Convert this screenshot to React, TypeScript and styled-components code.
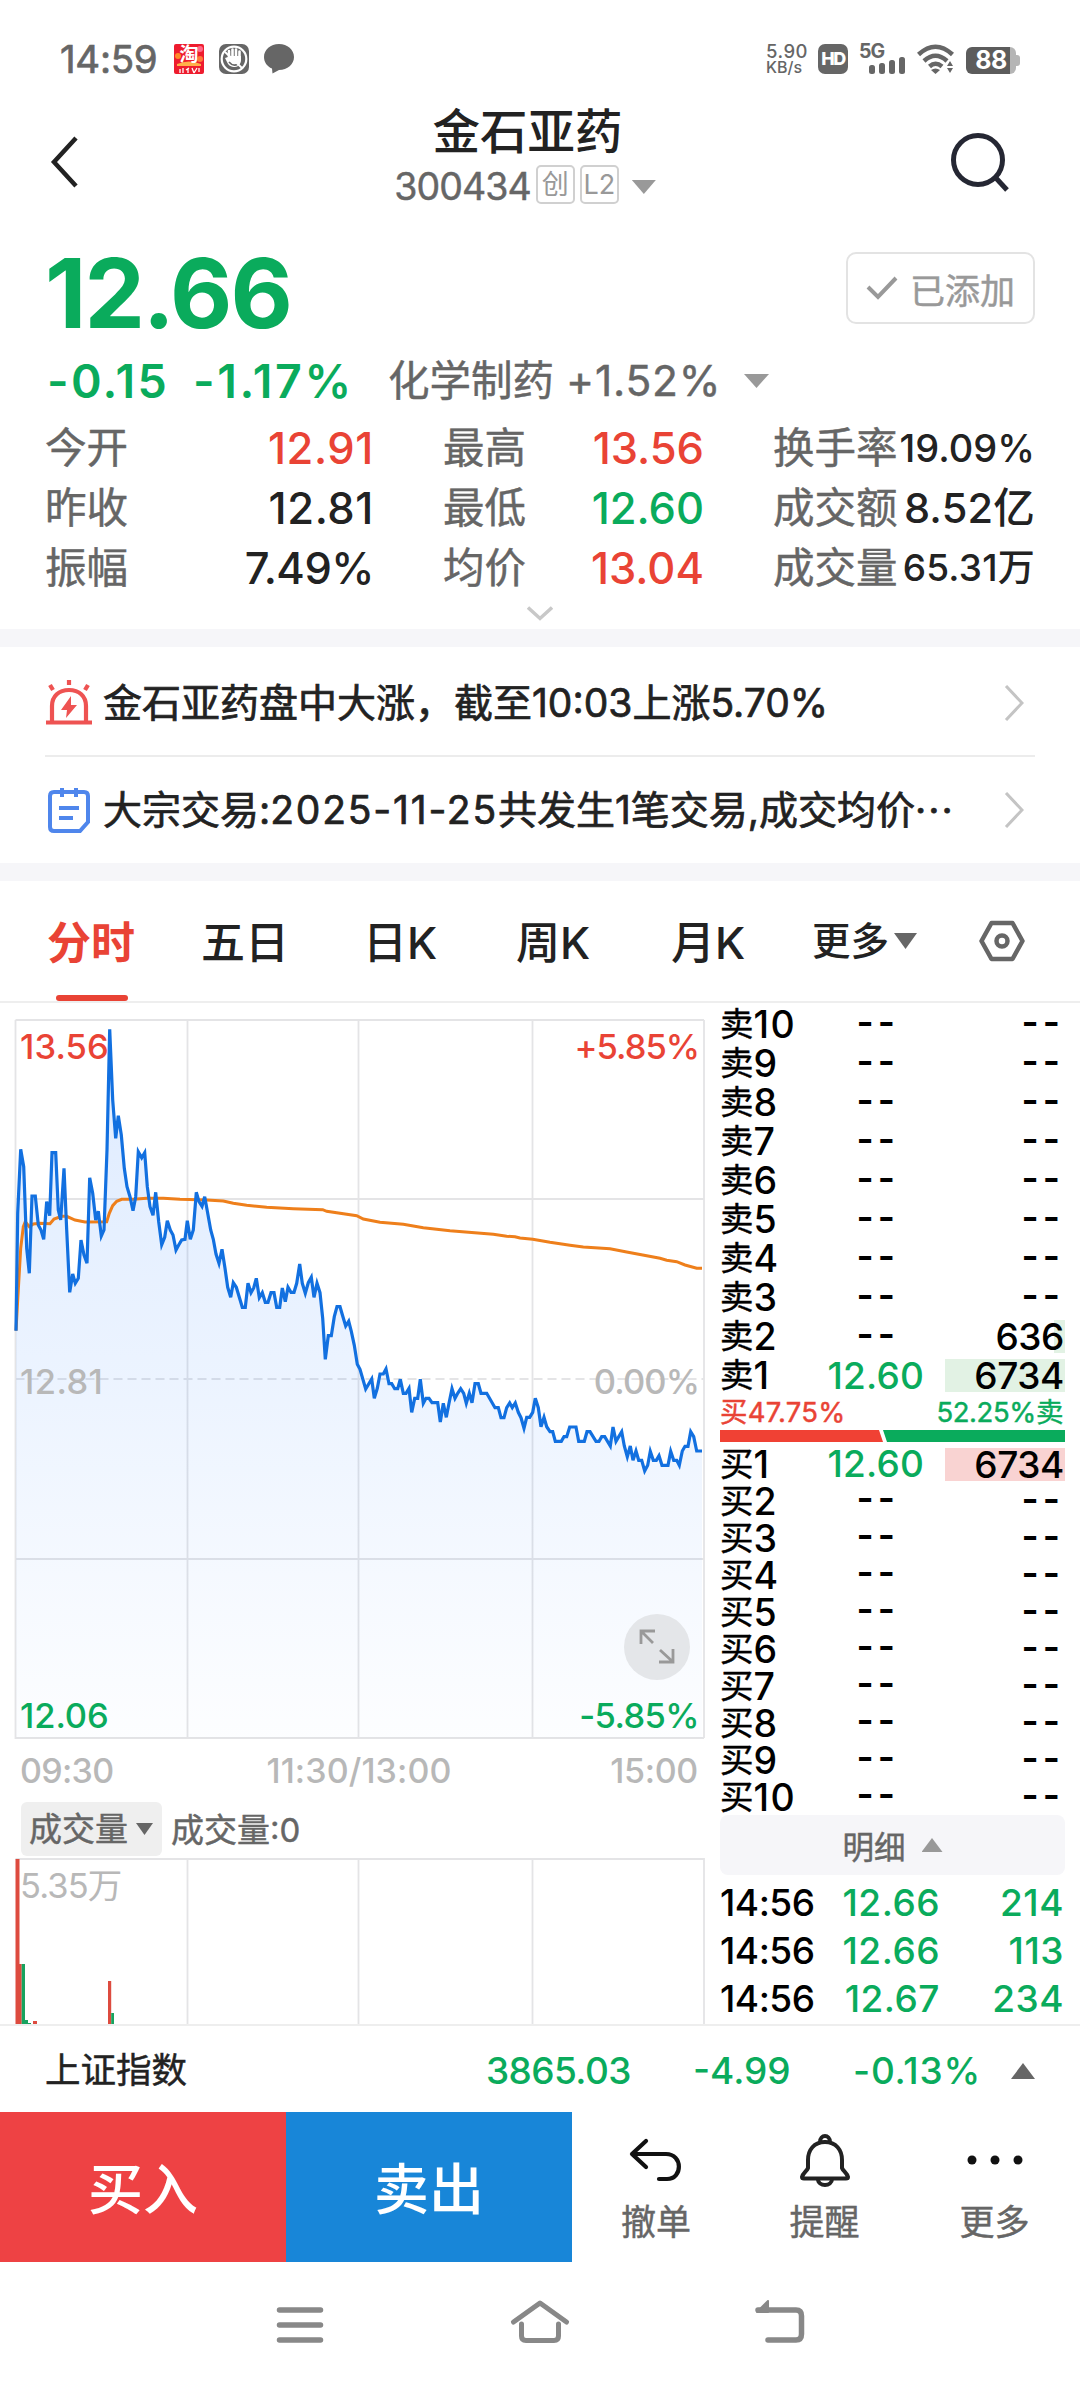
import React from "react";
import styled, { createGlobalStyle } from "styled-components";

const RED = "#e94335";
const GREEN = "#0aab5c";
const INK = "#222222";
const GREY = "#666666";
const PALE = "#b8b8b8";

const Global = createGlobalStyle`
  * { box-sizing: border-box; }
  body {
    margin: 0;
    background: #fff;
    font-family: Inter, "Noto Sans CJK SC", sans-serif;
    font-weight: 500;
    color: ${INK};
  }
`;

const Page = styled.div`
  width: 1080px;
  height: 2388px;
  display: flex;
  flex-direction: column;
  overflow: hidden;
  background: #fff;
`;

/* text with tunable size, tracking and colour */
const Txt = styled.span<{ $s: number; $ls?: number; $c?: string; $w?: number }>`
  font-size: ${(p) => p.$s}px;
  letter-spacing: ${(p) => p.$ls ?? 0}px;
  color: ${(p) => p.$c ?? INK};
  font-weight: ${(p) => p.$w ?? 500};
  -webkit-text-stroke: ${(p) => (p.$w === 400 ? 0.45 : 0)}px currentColor;
  white-space: nowrap;
`;

const Tri = styled.i<{ $w: number; $h: number; $c: string; $up?: boolean }>`
  display: block;
  width: ${(p) => p.$w}px;
  height: ${(p) => p.$h}px;
  background: ${(p) => p.$c};
  clip-path: ${(p) => (p.$up ? "polygon(50% 0, 100% 100%, 0 100%)" : "polygon(0 0, 100% 0, 50% 100%)")};
`;

/* ---------- status bar ---------- */
const Status = styled.header`
  height: 96px;
  padding: 22px 60px 0 60px;
  display: flex;
  align-items: center;
  line-height: 40px;
`;
const StatusLeft = styled.div`
  display: flex;
  align-items: center;
  gap: 15px;
  flex: 1;
`;
const Clock = styled.div`
  width: 99px;
  font-size: 38.5px;
  letter-spacing: -0.3px;
  font-weight: 400;
  color: ${GREY};
  -webkit-text-stroke: 0.7px ${GREY};
`;
const StatusRight = styled.div`
  display: flex;
  align-items: center;
`;
const Speed = styled.div`
  width: 51px;
  margin-left: -1px;
  margin-right: 1px;
  font-size: 18.5px;
  line-height: 16px;
  letter-spacing: 0.5px;
  color: ${GREY};
  white-space: nowrap;
`;
const SpeedUnit = styled.div`
  font-size: 16px;
  line-height: 16px;
  letter-spacing: 0;
`;
const HdBadge = styled.div`
  width: 30px;
  height: 30px;
  border-radius: 7px;
  background: ${GREY};
  color: #fff;
  font-size: 18px;
  font-weight: 800;
  line-height: 30px;
  text-align: center;
  letter-spacing: -1.5px;
  margin-right: 12px;
`;
const Battery = styled.div`
  width: 54px;
  height: 27px;
  margin: 2px 0 0 11px;
  display: flex;
  align-items: center;
`;
const BatteryBody = styled.div`
  width: 50px;
  height: 27px;
  border-radius: 6px;
  background: linear-gradient(90deg, #5c5c5c 44px, #b5b5b5 44px);
  color: #fff;
  font-weight: 700;
  font-size: 25px;
  line-height: 27px;
  text-align: center;
  letter-spacing: -0.5px;
`;
const BatteryTip = styled.div`
  width: 4px;
  height: 11px;
  border-radius: 0 3px 3px 0;
  background: #b5b5b5;
`;

/* ---------- title ---------- */
const TitleBar = styled.div`
  height: 132px;
  padding: 0 69px 0 50px;
  display: grid;
  grid-template-columns: 275px 400px 1fr;
`;
const TitleMid = styled.div`
  display: flex;
  flex-direction: column;
  align-items: center;
  padding-top: 3px;
`;
const Name = styled.div`
  font-size: 47.5px;
  line-height: 65px;
  padding-left: 5px;
`;
const CodeRow = styled.div`
  display: flex;
  align-items: center;
  height: 46px;
  line-height: 46px;
`;
const Tag = styled.div`
  width: 39px;
  height: 39px;
  border: 2px solid #d0d0d0;
  border-radius: 5px;
  margin: -5px 0 0 5px;
  color: #999;
  font-size: 27px;
  line-height: 35px;
  text-align: center;
  font-weight: 400;
`;
const CenterV = styled.div`
  display: flex;
  align-items: center;
`;
const EndV = styled(CenterV)`
  justify-content: flex-end;
`;

/* ---------- quote ---------- */
const Quote = styled.section`
  height: 401px;
  padding: 0 45px;
  display: flex;
  flex-direction: column;
`;
const PriceRow = styled.div`
  height: 130px;
  display: flex;
  justify-content: space-between;
  align-items: center;
`;
const Added = styled.button`
  width: 189px;
  height: 72px;
  margin: 0 0 10px;
  padding: 0 0 0 18px;
  border: 2px solid #e3e3e3;
  border-radius: 10px;
  background: #fff;
  display: flex;
  align-items: center;
  gap: 12px;
  font-family: inherit;
`;
const ChangeRow = styled.div`
  height: 46px;
  margin-bottom: 14px;
  display: flex;
  align-items: center;
  line-height: 46px;
`;
const Cell = styled.div<{ $w: number; $ml?: number }>`
  width: ${(p) => p.$w}px;
  margin-left: ${(p) => p.$ml ?? 0}px;
  display: flex;
  align-items: center;
  flex: none;
`;
const StatGrid = styled.div`
  display: grid;
  grid-template-columns: 329px 261px 262px;
  column-gap: 69px;
  grid-template-rows: repeat(3, 60px);
  line-height: 60px;
`;
const Stat = styled.div`
  display: flex;
  justify-content: space-between;
  align-items: center;
`;
const Expand = styled.div`
  height: 31px;
  display: flex;
  align-items: center;
  justify-content: center;
`;
const Band = styled.div`
  height: 18px;
  background: #f6f6f9;
  flex: none;
`;

/* ---------- news ---------- */
const News = styled.div<{ $h: number; $pt?: number }>`
  height: ${(p) => p.$h}px;
  padding: ${(p) => p.$pt ?? 0}px 11px 0 0;
  margin: 0 45px;
  display: flex;
  align-items: center;
  line-height: 50px;
`;
const NewsText = styled.div`
  margin-left: 10px;
  flex: 1;
  font-size: 39px;
  font-weight: 400;
  -webkit-text-stroke: 0.7px currentColor;
  white-space: nowrap;
`;
const Wide = styled.span<{ $ls: number }>`
  letter-spacing: ${(p) => p.$ls}px;
`;
const Rule = styled.div`
  height: 2px;
  margin: 0 45px;
  background: #ececec;
`;

/* ---------- tabs ---------- */
const Tabs = styled.nav`
  height: 122px;
  border-bottom: 2px solid #eeeeee;
  padding-left: 47px;
  display: grid;
  grid-template-columns: 154px 162px 153px 155px 141px 167px 1fr;
  align-items: center;
  line-height: 60px;
`;
const Tab = styled.div<{ $on?: boolean }>`
  height: 120px;
  padding-top: 32px;
  font-size: 44px;
  color: ${(p) => (p.$on ? RED : INK)};
  font-weight: ${(p) => (p.$on ? 700 : 500)};
  display: flex;
  flex-direction: column;
`;
const TabLine = styled.div`
  width: 72px;
  height: 6px;
  border-radius: 3px;
  margin: 22px 0 0 9px;
  background: ${RED};
`;
const MoreTab = styled.div`
  display: flex;
  align-items: center;
  gap: 5px;
`;

/* ---------- main ---------- */
const Main = styled.main`
  height: 1021px;
  display: grid;
  grid-template-columns: 720px 345px;
`;
const Left = styled.div``;
const ChartBox = styled.div`
  position: relative;
  height: 743px;
`;
const VolBox = styled.div`
  position: relative;
  height: 167px;
`;
const Overlay = styled.span<{ $top: number; $right?: boolean; $c: string; $ls?: number }>`
  position: absolute;
  top: ${(p) => p.$top}px;
  ${(p) => (p.$right ? "right: 21px;" : "left: 20px;")}
  font-size: 34.5px;
  line-height: 40px;
  font-weight: 450;
  letter-spacing: ${(p) => p.$ls ?? -0.6}px;
  color: ${(p) => p.$c};
  white-space: nowrap;
`;
const VolMax = styled(Overlay)`
  font-weight: 400;
`;
const FullBtn = styled.div`
  position: absolute;
  left: 624px;
  top: 611px;
  width: 66px;
  height: 66px;
  border-radius: 50%;
  background: #e4e6e9;
`;
const Axis = styled.div`
  height: 50px;
  padding: 0 22px 0 20px;
  display: grid;
  grid-template-columns: 100px 1fr 100px;
  line-height: 50px;
  & > :nth-child(2) { text-align: center; }
  & > :nth-child(3) { text-align: right; }
`;
const VolBar = styled.div`
  height: 61px;
  padding: 6px 0 0 21px;
  display: flex;
  line-height: 56px;
`;
const VolBtn = styled.div`
  width: 141px;
  height: 54px;
  border-radius: 6px;
  background: #efefef;
  padding-left: 8px;
  margin-right: 9px;
  display: flex;
  align-items: center;
  gap: 8px;
`;
const Book = styled.div`
  padding-top: 2px;
`;
const BookRow = styled.div<{ $h: number }>`
  height: ${(p) => p.$h}px;
  line-height: ${(p) => p.$h}px;
  display: grid;
  grid-template-columns: 100px 105px 20px 120px;
  font-size: 37px;
  font-weight: 450;
  color: #000;
  white-space: nowrap;
`;
const Side = styled.div`
  display: flex;
  align-items: center;
`;
const Px = styled.div<{ $dash?: boolean }>`
  text-align: right;
  color: ${(p) => (p.$dash ? "#000" : GREEN)};
  letter-spacing: ${(p) => (p.$dash ? "4px" : "0.2px")};
  font-weight: ${(p) => (p.$dash ? 600 : 450)};
  ${(p) => (p.$dash ? "padding-right: 26px; margin-top: -3px;" : "padding-right: 1px;")}
`;
const Qty = styled.div<{ $dash?: boolean; $fill?: number; $tone?: string }>`
  grid-column: 4;
  text-align: right;
  margin: ${(p) => (p.$dash ? "0 0 6px" : "3px 0")};
  line-height: 33px;
  height: calc(100% - 6px);
  padding-right: 1px;
  letter-spacing: ${(p) => (p.$dash ? "4px" : "-0.4px")};
  font-weight: ${(p) => (p.$dash ? 600 : 450)};
  background: ${(p) => (p.$fill ? `linear-gradient(${p.$tone}, ${p.$tone}) right / ${p.$fill}px 100% no-repeat` : "none")};
`;
const Ratio = styled.div`
  height: 35px;
  line-height: 34px;
  padding: 0 2px 0 0;
  display: flex;
  justify-content: space-between;
`;
const RatioBar = styled.div`
  height: 12px;
  margin-bottom: 3px;
  display: flex;
  & > :first-child {
    width: 163px;
    background: #f04134;
    clip-path: polygon(0 0, 159px 0, 163px 100%, 0 100%);
  }
  & > :last-child {
    flex: 1;
    background: ${GREEN};
    clip-path: polygon(0 0, 100% 0, 100% 100%, 4px 100%);
  }
`;
const Detail = styled.div`
  height: 60px;
  margin-bottom: 4px;
  border-radius: 8px;
  background: #f6f6f9;
  display: flex;
  align-items: center;
  justify-content: center;
  gap: 16px;
`;
const Tick = styled.div`
  height: 48px;
  line-height: 48px;
  display: grid;
  grid-template-columns: 120px 100px 124px;
  font-size: 37px;
  letter-spacing: -0.5px;
  font-weight: 450;
  color: #000;
`;
const TickNum = styled.div`
  text-align: right;
  letter-spacing: 0.5px;
  color: ${GREEN};
`;

/* ---------- bottom ---------- */
const IndexBar = styled.div`
  height: 88px;
  border-top: 2px solid #eeeeee;
  padding: 4px 45px 0 45px;
  display: flex;
  align-items: center;
  line-height: 50px;
`;
const Actions = styled.div`
  height: 150px;
  display: flex;
`;
const Trade = styled.div<{ $c: string }>`
  width: 286px;
  background: ${(p) => p.$c};
  color: #fff;
  font-size: 55px;
  line-height: 154px;
  text-align: center;
`;
const Tools = styled.div`
  flex: 1;
  display: grid;
  grid-template-columns: 168px 169px 171px;
`;
const Tool = styled.div`
  display: flex;
  flex-direction: column;
  align-items: center;
  padding-top: 18px;
  font-size: 35px;
  line-height: 44px;
  color: ${GREY};
  font-weight: 400;
  -webkit-text-stroke: 0.45px currentColor;
  & > svg { margin-bottom: 6px; }
`;
const NavBar = styled.div`
  height: 126px;
  display: flex;
  align-items: center;
  padding-left: 270px;
  gap: 180px;
`;
const Wifi = styled.svg`
  margin-left: 11px;
`;
const Glyph = styled.svg`
  overflow: visible;
`;
const Plot = styled.svg`
  display: block;
`;

/* ---------- series ---------- */
type P = [number, number];
const morning: P[] = [[48,992],[53,640],[62,448],[71,500],[80,745],[88,820],[96,588],[106,588],[115,675],[123,690],[131,718],[140,605],[149,647],[156,458],[167,458],[175,630],[182,660],[192,505],[200,690],[209,877],[218,822],[226,850],[235,835],[243,720],[252,765],[261,790],[269,533],[278,580],[287,660],[295,634],[304,708],[312,690],[321,450],[329,88],[338,300],[347,415],[355,347],[364,405],[373,505],[381,560],[390,590],[399,632],[407,590],[415,455],[425,473],[434,458],[442,560],[450,620],[459,646],[467,577],[476,665],[485,734],[494,712],[502,662],[511,690],[519,705],[528,750],[536,735],[545,720],[555,718],[562,662],[571,718],[580,690],[589,577],[597,605],[606,619],[614,590],[623,640],[632,690],[640,718],[648,762],[657,790],[666,748],[675,805],[683,862],[692,892],[700,848],[709,862],[718,892],[727,922],[736,922],[744,850],[753,878],[761,864],[769,835],[778,893],[787,878],[796,907],[804,907],[813,878],[822,878],[830,922],[839,922],[847,864],[856,905],[864,862],[873,877],[882,877],[890,850],[899,792],[907,850],[916,880],[925,848],[934,832],[942,892],[951,850],[960,878],[968,955],[976,1078],[985,1007],[994,1007],[1003,950],[1011,920],[1020,920],[1028,948],[1037,978],[1046,964],[1054,994],[1063,1036],[1072,1093]];
const afternoon: P[] = [[30,598],[47,657],[65,627],[73,685],[82,655],[90,612],[100,612],[108,597],[117,641],[125,641],[134,656],[143,656],[151,628],[160,670],[168,670],[177,655],[185,727],[194,685],[203,685],[211,628],[220,700],[228,685],[237,685],[246,698],[263,698],[271,756],[280,700],[289,742],[297,700],[306,656],[315,685],[323,670],[332,656],[341,670],[349,700],[358,670],[366,698],[375,641],[385,641],[393,670],[410,670],[435,713],[445,713],[453,743],[462,743],[470,713],[479,699],[487,713],[496,699],[505,727],[513,743],[522,775],[530,742],[539,742],[548,727],[556,685],[565,713],[573,770],[582,742],[590,770],[600,785],[608,785],[616,814],[634,814],[642,800],[650,800],[659,771],[678,771],[686,814],[703,814],[711,785],[720,785],[738,814],[747,814],[755,800],[764,800],[781,828],[789,771],[798,814],[815,785],[823,828],[832,860],[841,828],[849,871],[858,843],[866,871],[875,871],[884,903],[893,886],[901,844],[910,871],[919,871],[927,857],[936,886],[954,886],[962,844],[971,871],[980,871],[988,886],[997,843],[1005,829],[1014,829],[1022,785],[1031,800],[1040,843],[1056,843]];
const avgMorning: P[] = [[48,992],[53,900],[62,745],[70,680],[76,665],[88,680],[100,672],[120,670],[150,671],[162,657],[185,649],[200,649],[225,660],[255,666],[320,665],[328,640],[338,617],[350,604],[365,598],[400,598],[440,595],[490,595],[540,598],[620,600],[670,603],[700,610],[740,616],[800,622],[880,626],[968,629],[980,634],[1070,647]];
const avgAfternoon: P[] = [[40,147],[90,157],[160,163],[220,173],[300,182],[430,193],[470,199],[495,200],[510,204],[548,208],[600,217],[660,226],[700,231],[780,236],[830,246],[930,265],[950,271],[980,275],[1005,285],[1040,295],[1056,295]];
const plot = (am: P[], pm: P[]) =>
  [
    ...am.map(([x, y]) => [x / 3, y / 3 - 3]),
    ...pm.map(([x, y]) => [350 + x / 3, 167 + y / 3]),
  ]
    .map(([x, y]) => `${x.toFixed(1)},${y.toFixed(1)}`)
    .join(" ");
const priceLine = plot(morning, afternoon);
const avgLine = plot(avgMorning, avgAfternoon);

const sells = ["10", "9", "8", "7", "6", "5", "4", "3", "2", "1"];
const buys = ["1", "2", "3", "4", "5", "6", "7", "8", "9", "10"];

function Line({ side, n, h }: { side: string; n: string; h: number }) {
  const top = n === "1";
  const sell2 = side === "卖" && n === "2";
  const qty = top ? "6734" : sell2 ? "636" : "--";
  return (
    <BookRow $h={h}>
      <Side>
        <Txt $s={33.5} $c="#000" $w={400}>{side}</Txt>
        <Txt $s={37.5} $c="#000" $w={450} $ls={n === "10" ? 1.5 : -0.5}>{n}</Txt>
      </Side>
      <Px $dash={!top}>{top ? "12.60" : "--"}</Px>
      <Qty $dash={qty === "--"} $fill={top ? 120 : sell2 ? 11 : 0} $tone={side === "卖" ? "#e2f2e4" : "#f9d3d2"}>
        {qty}
      </Qty>
    </BookRow>
  );
}

const Chevron = () => (
  <svg width="20" height="36" viewBox="0 0 20 36" fill="none" stroke="#c4c4c4" strokeWidth="3">
    <path d="M2 1L18 18L2 35" />
  </svg>
);

export default function App() {
  return (
    <Page>
      <Global />
      <Status>
        <StatusLeft>
          <Clock>14:59</Clock>
          <Glyph width="30" height="30" viewBox="0 0 30 30">
            <rect width="30" height="30" rx="2" fill="#ee1c2e" />
            <circle cx="4" cy="12" r="3" fill="#ff8a2a" />
            <circle cx="26" cy="5" r="3" fill="#ff6a8a" />
            <circle cx="26" cy="15" r="3" fill="#ff7a3a" />
            <path d="M3 20Q15 15 27 20V22H3Z" fill="#ffb04a" />
            <text x="15" y="17" fontSize="19" fontWeight="700" fill="#fff" textAnchor="middle" fontFamily="Noto Sans CJK SC">淘</text>
            <path d="M6 25v4M9 24v5M12 26l3-2M14 25v4M18 24l2 5M23 24l-3 5M25 24v4" stroke="#fff" strokeWidth="1.3" />
          </Glyph>
          <svg width="30" height="30" viewBox="0 0 30 30" fill="none" stroke="#fff">
            <rect width="30" height="30" rx="7" fill={GREY} stroke="none" />
            <circle cx="15" cy="15" r="12.3" strokeWidth="2.2" />
            <path d="M10 7v8M13.5 5.500v8M17 5.500v8M20.500 7.500v8" strokeWidth="2.6" strokeLinecap="round" />
            <path d="M9 12h13v4c0 4-3 7-6 7c-4 0-7-2-8-5l-2-4l3-1z" fill="#fff" stroke="none" />
            <path d="M10 18q4 5 9 2" stroke={GREY} strokeWidth="1.600" />
            <path d="M6 8L23 24" strokeWidth="1.800" />
          </svg>
          <svg width="30" height="30" viewBox="0 0 30 30">
            <path d="M15 0C23.500 0 30 5.800 30 13S23.500 26 15 26L8.500 29.500L8 24.500C3 22.500 0 18 0 13C0 5.800 6.500 0 15 0Z" fill={GREY} />
          </svg>
        </StatusLeft>
        <StatusRight>
          <Speed>5.90<SpeedUnit>KB/s</SpeedUnit></Speed>
          <HdBadge>HD</HdBadge>
          <Glyph width="46" height="32" viewBox="0 0 46 32" fill={GREY}>
            <text x="-1" y="15" fontSize="19.500" fontWeight="700" fontFamily="Inter" letterSpacing="-1">5G</text>
            <rect x="9" y="22" width="6" height="9" rx="2.500" />
            <rect x="19" y="20" width="6" height="11" rx="2.500" />
            <rect x="29" y="17" width="6" height="14" rx="2.500" />
            <rect x="39" y="14" width="6" height="17" rx="2.500" />
          </Glyph>
          <Wifi width="38" height="30" viewBox="0 0 38 30" fill="none" stroke={GREY} strokeWidth="4.500">
            <path d="M1.500 10.500Q18.500 -5 35.500 10.500" />
            <path d="M7 17Q18.500 6.500 30 17" />
            <path d="M12.500 22.500Q18.500 17 25 22.500" />
            <path d="M14 26q4.500 -3 9 0l-4.500 4z" fill={GREY} stroke="none" />
            <path d="M30 22l3-5l3 5zM30 24h6l-3 5z" fill={GREY} stroke="none" />
          </Wifi>
          <Battery>
            <BatteryBody>88</BatteryBody>
            <BatteryTip />
          </Battery>
        </StatusRight>
      </Status>

      <TitleBar>
        <CenterV>
          <svg width="30" height="52" viewBox="0 0 30 52" fill="none" stroke={INK} strokeWidth="4.500">
            <path d="M26 2L4 26L26 50" />
          </svg>
        </CenterV>
        <TitleMid>
          <Name>金石亚药</Name>
          <CodeRow>
            <Txt $s={37.5} $c={GREY} $w={400} $ls={-0.9}>300434</Txt>
            <Tag>创</Tag>
            <Tag>L2</Tag>
            <Cell $w={24} $ml={13}><Tri $w={24} $h={14} $c="#999" /></Cell>
          </CodeRow>
        </TitleMid>
        <EndV>
          <svg width="62" height="62" viewBox="0 0 62 62" fill="none" stroke="#252733" strokeWidth="5">
            <circle cx="29" cy="29" r="24.500" />
            <path d="M46 46L58 59" />
          </svg>
        </EndV>
      </TitleBar>

      <Quote>
        <PriceRow>
          <Txt $s={96} $c={GREEN} $w={700} $ls={-2}>12.66</Txt>
          <Added>
            <svg width="32" height="24" viewBox="0 0 32 24" fill="none" stroke="#999" strokeWidth="4">
              <path d="M2 11L12 21L30 2" />
            </svg>
            <Txt $s={35} $c="#999" $w={400}>已添加</Txt>
          </Added>
        </PriceRow>
        <ChangeRow>
          <Cell $w={146} $ml={2}><Txt $s={46.5} $c={GREEN} $w={600} $ls={2.3}>-0.15</Txt></Cell>
          <Cell $w={195}><Txt $s={46.5} $c={GREEN} $w={600} $ls={2.6}>-1.17%</Txt></Cell>
          <Cell $w={178}><Txt $s={41.5} $c={GREY} $w={400}>化学制药</Txt></Cell>
          <Cell $w={178}><Txt $s={42.5} $c={GREY} $w={400} $ls={0.8}>+1.52%</Txt></Cell>
          <Tri $w={25} $h={14} $c="#999" />
        </ChangeRow>
        <StatGrid>
          <Stat><Txt $s={41.5} $c={GREY} $w={400}>今开</Txt><Txt $s={43.5} $c={RED} $ls={0.6}>12.91</Txt></Stat>
          <Stat><Txt $s={41.5} $c={GREY} $w={400}>最高</Txt><Txt $s={43.5} $c={RED}>13.56</Txt></Stat>
          <Stat><Txt $s={41.5} $c={GREY} $w={400}>换手率</Txt><Txt $s={38}>19.09%</Txt></Stat>
          <Stat><Txt $s={41.5} $c={GREY} $w={400}>昨收</Txt><Txt $s={43.5} $ls={0.6}>12.81</Txt></Stat>
          <Stat><Txt $s={41.5} $c={GREY} $w={400}>最低</Txt><Txt $s={43.5} $c={GREEN}>12.60</Txt></Stat>
          <Stat><Txt $s={41.5} $c={GREY} $w={400}>成交额</Txt><Txt $s={41.5} $ls={0.2}>8.52亿</Txt></Stat>
          <Stat><Txt $s={41.5} $c={GREY} $w={400}>振幅</Txt><Txt $s={43.5} $ls={-0.5}>7.49%</Txt></Stat>
          <Stat><Txt $s={41.5} $c={GREY} $w={400}>均价</Txt><Txt $s={43.5} $c={RED}>13.04</Txt></Stat>
          <Stat><Txt $s={41.5} $c={GREY} $w={400}>成交量</Txt><Txt $s={37} $ls={0.2}>65.31万</Txt></Stat>
        </StatGrid>
        <Expand>
          <svg width="26" height="15" viewBox="0 0 26 15" fill="none" stroke="#c8c8c8" strokeWidth="3.500">
            <path d="M1 1.500L13 12.500L25 1.500" />
          </svg>
        </Expand>
      </Quote>
      <Band />

      <News $h={108} $pt={4}>
        <svg width="48" height="46" viewBox="0 0 48 46" fill="none" stroke="#ee5352" strokeWidth="4.200">
          <path d="M7 43V26C7 16 14 10 24 10S41 16 41 26V43" />
          <path d="M1 42.500H47M24 0V5M5 5l3 5M43 5l-3 5" />
          <path d="M26 16L16 30H22L21 38L32 25H26Z" fill="#ee5352" stroke="none" />
        </svg>
        <NewsText>金石亚药盘中大涨，截至10:03上涨5.70%</NewsText>
        <Chevron />
      </News>
      <Rule />
      <News $h={106}>
        <svg width="48" height="46" viewBox="0 0 48 46" fill="none" stroke="#4f86ec" strokeWidth="4">
          <path d="M9 5H39Q43 5 43 9V35L35 44H9Q5 44 5 40V9Q5 5 9 5ZM17 1V10M31 1V10M14 21H34M14 31H28" />
        </svg>
        <NewsText>大宗交易:<Wide $ls={1.8}>2025-11-25</Wide>共发生1笔交易,成交均价<Wide $ls={2}>···</Wide></NewsText>
        <Chevron />
      </News>
      <Band />

      <Tabs>
        <Tab $on>分时<TabLine /></Tab>
        <Tab>五日</Tab>
        <Tab>日K</Tab>
        <Tab>周K</Tab>
        <Tab>月K</Tab>
        <MoreTab><Txt $s={38.5}>更多</Txt><Tri $w={23} $h={16} $c={GREY} /></MoreTab>
        <svg width="46" height="42" viewBox="0 0 46 42" fill="none" stroke={GREY} strokeWidth="4.500">
          <path d="M12.500 3H33.500L43.500 21L33.500 39H12.500L2.500 21Z" strokeLinejoin="round" />
          <circle cx="23" cy="21" r="5.500" />
        </svg>
      </Tabs>

      <Main>
        <Left>
          <ChartBox>
            <Plot width="720" height="743" viewBox="0 0 720 743" fill="none">
              <defs>
                <linearGradient id="area" x1="0" y1="24" x2="0" y2="735" gradientUnits="userSpaceOnUse">
                  <stop offset="0" stopColor="#1270ff" stopOpacity="0.14" />
                  <stop offset="0.5" stopColor="#1270ff" stopOpacity="0.08" />
                  <stop offset="1" stopColor="#1270ff" stopOpacity="0.01" />
                </linearGradient>
              </defs>
              <path d="M15.500 17H704M187.500 17V735M358.500 17V735M532.500 17V735M704 17V735M15.500 17V735H704M15.500 196H704M15.500 556H704" stroke="#e4e4e6" strokeWidth="1.800" />
              <path d="M15.500 376H704" stroke="#e4e4e6" strokeWidth="2" strokeDasharray="9 5" />
              <polygon points={`16,735 ${priceLine} 702,735`} fill="url(#area)" />
              <polyline points={avgLine} stroke="#ee7f1b" strokeWidth="3" />
              <polyline points={priceLine} stroke="#1270e0" strokeWidth="3.200" />
            </Plot>
            <Overlay $top={24} $c={RED} $ls={0.1}>13.56</Overlay>
            <Overlay $top={24} $c={RED} $right $ls={-1}>+5.85%</Overlay>
            <Overlay $top={359} $c={PALE} $ls={0.4}>12.81</Overlay>
            <Overlay $top={359} $c={PALE} $right $ls={-0.9}>0.00%</Overlay>
            <Overlay $top={693} $c={GREEN} $ls={-0.1}>12.06</Overlay>
            <Overlay $top={693} $c={GREEN} $right>-5.85%</Overlay>
            <FullBtn>
              <svg width="66" height="66" viewBox="0 0 66 66" fill="none" stroke="#999" strokeWidth="2.800">
                <path d="M17 30V17H31M17.500 17.500L29 29M49 35V48H35M48.500 47.500L36 36" />
              </svg>
            </FullBtn>
          </ChartBox>
          <Axis>
            <Txt $s={34} $c={PALE} $w={450} $ls={-0.7}>09:30</Txt>
            <Txt $s={34} $c={PALE} $w={450} $ls={0.1}>11:30/13:00</Txt>
            <Txt $s={34} $c={PALE} $w={450} $ls={-0.3}>15:00</Txt>
          </Axis>
          <VolBar>
            <VolBtn><Txt $s={33} $c={GREY} $w={400}>成交量</Txt><Tri $w={17} $h={12} $c={GREY} /></VolBtn>
            <Txt $s={33} $c={GREY} $w={400}>成交量:0</Txt>
          </VolBar>
          <VolBox>
            <Plot width="720" height="167" viewBox="0 0 720 167">
              <path d="M15.500 2H704V167M187.500 2V167M358.500 2V167M532.500 2V167" fill="none" stroke="#e4e4e6" strokeWidth="1.800" />
              <path d="M15.500 2h4v105h2.200v60h-6.200zM33 164h4v3h-4zM108 124h3.200v43h-3.200z" fill="#dd4b3f" />
              <path d="M21.700 107h3.300v56h3v3h3v1h-9.300zM111.200 156h2.800v11h-2.800z" fill="#17a35f" />
            </Plot>
            <VolMax $top={9} $c={PALE} $ls={-0.9}>5.35万</VolMax>
          </VolBox>
        </Left>
        <Book>
          {sells.map((n) => <Line key={n} side="卖" n={n} h={39} />)}
          <Ratio>
            <Txt $s={27.5} $c={RED} $w={400} $ls={0.2}>买47.75%</Txt>
            <Txt $s={27.5} $c={GREEN} $w={400} $ls={-0.4}>52.25%卖</Txt>
          </Ratio>
          <RatioBar><div /><div /></RatioBar>
          {buys.map((n) => <Line key={n} side="买" n={n} h={37} />)}
          <Detail><Txt $s={31.5} $c={GREY} $w={400}>明细</Txt><Tri $up $w={21} $h={14} $c="#999" /></Detail>
          <Tick><span>14:56</span><TickNum>12.66</TickNum><TickNum>214</TickNum></Tick>
          <Tick><span>14:56</span><TickNum>12.66</TickNum><TickNum>113</TickNum></Tick>
          <Tick><span>14:56</span><TickNum>12.67</TickNum><TickNum>234</TickNum></Tick>
        </Book>
      </Main>

      <IndexBar>
        <Cell $w={441}><Txt $s={35.5} $w={400}>上证指数</Txt></Cell>
        <Cell $w={207}><Txt $s={37} $c={GREEN} $w={450} $ls={-0.6}>3865.03</Txt></Cell>
        <Cell $w={160}><Txt $s={37} $c={GREEN} $w={450}>-4.99</Txt></Cell>
        <Cell $w={158}><Txt $s={37} $c={GREEN} $w={450} $ls={0.8}>-0.13%</Txt></Cell>
        <Tri $up $w={24} $h={16} $c={GREY} />
      </IndexBar>

      <Actions>
        <Trade $c="#ee4244">买入</Trade>
        <Trade $c="#1886d8">卖出</Trade>
        <Tools>
          <Tool>
            <svg width="60" height="64" viewBox="0 0 60 64" fill="none" stroke="#111" strokeWidth="4.200" strokeLinecap="round" strokeLinejoin="round">
              <path d="M20 11L6 24L20 37M6 24H40C57 24 57 49 41 49H33" />
            </svg>
            撤单
          </Tool>
          <Tool>
            <svg width="60" height="64" viewBox="0 0 60 64" fill="none" stroke="#222" strokeWidth="4" strokeLinejoin="round">
              <path d="M30 12C19 12 13 20 13 30V38C12 41 8 43 7 47C7 48 8 48.500 9 48.500H51C52 48.500 53 48 53 47C52 43 48 41 47 38V30C47 20 41 12 30 12Z" />
              <path d="M25 12C25 4 35 4 35 12M23 49C23 57 37 57 37 49" />
            </svg>
            提醒
          </Tool>
          <Tool>
            <svg width="60" height="64" viewBox="0 0 60 64" fill="#111">
              <circle cx="7" cy="30" r="4.500" /><circle cx="30" cy="30" r="4.500" /><circle cx="53" cy="30" r="4.500" />
            </svg>
            更多
          </Tool>
        </Tools>
      </Actions>

      <NavBar>
        <svg width="60" height="50" viewBox="0 0 60 50" stroke="#888" strokeWidth="5.500" strokeLinecap="round">
          <path d="M9.500 10H50.500M9.500 25H50.500M9.500 40H50.500" />
        </svg>
        <svg width="60" height="50" viewBox="0 0 60 50" fill="none" stroke="#888" strokeWidth="5" strokeLinecap="round" strokeLinejoin="round">
          <path d="M3.500 22L30 3L56.500 22M11.500 24V36Q11.500 40.500 16 40.500H44Q48.500 40.500 48.500 36V24" />
        </svg>
        <svg width="60" height="50" viewBox="0 0 60 50" fill="none" stroke="#888" strokeWidth="5.500" strokeLinejoin="round">
          <path d="M8 10H46Q51.500 10 51.500 16V34Q51.500 40 46 40H18" strokeLinecap="round" />
          <path d="M18 1V12H7Z" fill="#888" stroke="#888" strokeWidth="2" />
        </svg>
      </NavBar>
    </Page>
  );
}
